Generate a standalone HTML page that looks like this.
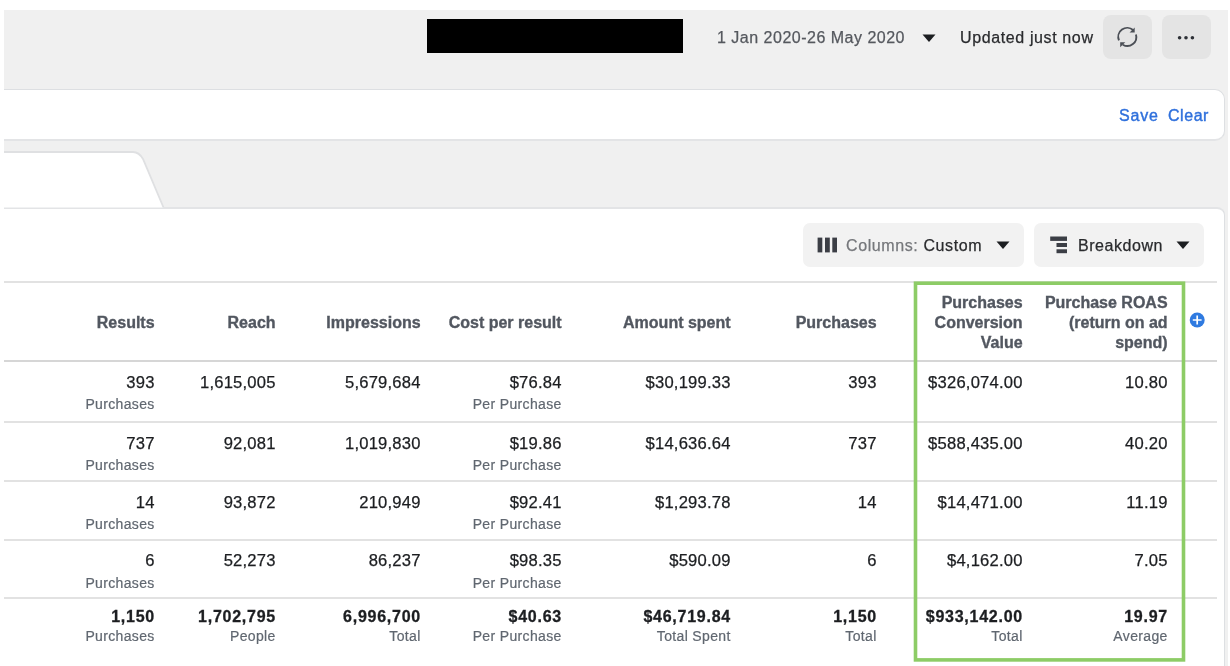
<!DOCTYPE html>
<html><head><meta charset="utf-8">
<style>
*{margin:0;padding:0;box-sizing:border-box}
html,body{width:1230px;height:666px;overflow:hidden;background:#fff;font-family:"Liberation Sans",sans-serif}
body{will-change:transform}
.a{position:absolute}
#bg{left:4px;top:10px;width:1224px;height:656px;background:#f0f0f0}
#redact{left:427px;top:19px;width:256px;height:34px;background:#000}
.t{position:absolute;white-space:nowrap;line-height:20px;-webkit-text-stroke:0.25px currentColor}
.btn{position:absolute;background:#e4e4e4;border-radius:8px}
#filter{left:4px;top:89px;width:1221px;height:52px;background:#fff;border:1px solid #dddfe2;border-bottom:2px solid #e3e4e6;border-left:none;border-radius:0 10px 10px 0}
#panel{left:4px;top:207px;width:1221px;height:470px;background:#fff;border:1px solid #dddfe2;border-top:2px solid #e3e4e6;border-left:none;border-radius:0 8px 0 0}
.tb{position:absolute;background:#f2f2f2;border-radius:7px}
.hl{position:absolute;left:4px;width:1213px;height:2px;background:#e2e2e2}
.h{position:absolute;white-space:nowrap;text-align:right;font-weight:bold;font-size:16px;line-height:20px;color:#525760;-webkit-text-stroke:0.35px #525760;margin-right:-0.6px}
.d{position:absolute;white-space:nowrap;text-align:right;font-size:16.6px;line-height:20px;color:#1c1e21;letter-spacing:0.2px;margin-right:-0.6px;-webkit-text-stroke:0.25px #1c1e21}
.s{position:absolute;white-space:nowrap;text-align:right;font-size:14px;line-height:18px;color:#606770;letter-spacing:0.35px;margin-right:-0.7px;-webkit-text-stroke:0.2px #606770}
.b{font-weight:bold;font-size:16px;letter-spacing:0.75px;margin-right:-1px;-webkit-text-stroke:0.3px #1c1e21}
</style></head><body>
<div class="a" id="bg"></div>
<div class="a" id="redact"></div>
<div class="t" style="left:717px;top:28px;font-size:16px;color:#55585e;letter-spacing:0.5px">1 Jan 2020-26 May 2020</div>
<svg class="a" style="left:922px;top:34px" width="14" height="9" viewBox="0 0 14 9"><path d="M0.5 0.5H13.5L7 8z" fill="#1c1e21"/></svg>
<div class="t" style="left:960px;top:28px;font-size:16px;color:#2a2b2e;letter-spacing:0.62px">Updated just now</div>
<div class="btn" style="left:1103px;top:15px;width:49px;height:44px"></div>
<div class="btn" style="left:1162px;top:15px;width:49px;height:44px"></div>
<svg class="a" style="left:1110px;top:20px" width="35" height="35" viewBox="0 0 35 35"><g fill="none" stroke="#4b4f56" stroke-width="1.9"><path d="M23.1 10A9 9 0 0 0 8.96 20.3"/><path d="M25.95 14.4A9 9 0 0 1 12.8 24.7"/></g><path d="M24.7 7.4V12.5H19.6z" fill="#4b4f56"/><path d="M10.2 22.3H15.3L10.2 27.2z" fill="#4b4f56"/></svg>
<svg class="a" style="left:1176px;top:34px" width="20" height="8" viewBox="0 0 20 8"><circle cx="3.6" cy="3.7" r="1.8" fill="#2d3036"/><circle cx="10" cy="3.7" r="1.8" fill="#2d3036"/><circle cx="16.4" cy="3.7" r="1.8" fill="#2d3036"/></svg>

<div class="a" id="filter"></div>
<div class="t" style="left:1119px;top:106px;font-size:16px;color:#2f70dc;letter-spacing:0.85px;-webkit-text-stroke:0.4px #2f70dc">Save</div>
<div class="t" style="left:1168px;top:106px;font-size:16px;color:#2f70dc;letter-spacing:0.55px;-webkit-text-stroke:0.4px #2f70dc">Clear</div>

<div class="a" id="panel"></div>
<svg class="a" style="left:4px;top:140px" width="170" height="70" viewBox="0 0 170 70"><path d="M0 12H129Q135 12 139 19L159.5 67.5H0z" fill="#fff"/><path d="M0 12H129Q135 12 139 19L159.5 67.5" fill="none" stroke="#dfe0e2" stroke-width="1.8"/></svg>

<div class="tb" style="left:803px;top:223px;width:221px;height:44px"></div>
<svg class="a" style="left:817px;top:237px" width="20" height="16" viewBox="0 0 20 16"><rect x="0.6" y="0.6" width="4.7" height="14.8" fill="#3b3e45"/><rect x="8" y="0.6" width="4.8" height="14.8" fill="#3b3e45"/><rect x="15.3" y="0.6" width="4.7" height="14.8" fill="#3b3e45"/></svg>
<div class="t" style="left:846px;top:236px;font-size:16px;color:#75777b;letter-spacing:0.6px">Columns: <span style="color:#2a2b2e">Custom</span></div>
<svg class="a" style="left:996px;top:241px" width="14" height="9" viewBox="0 0 14 9"><path d="M0.5 0.5H13.5L7 8z" fill="#1c1e21"/></svg>

<div class="tb" style="left:1034px;top:223px;width:170px;height:44px"></div>
<svg class="a" style="left:1050px;top:236px" width="18" height="18" viewBox="0 0 18 18"><rect x="0.2" y="0.5" width="16.8" height="4.4" fill="#3b3e45"/><rect x="6.5" y="7" width="10.5" height="4" fill="#3b3e45"/><rect x="6.5" y="13.3" width="10.5" height="3.9" fill="#3b3e45"/></svg>
<div class="t" style="left:1078px;top:236px;font-size:16px;color:#2a2b2e;letter-spacing:0.55px">Breakdown</div>
<svg class="a" style="left:1176px;top:241px" width="14" height="9" viewBox="0 0 14 9"><path d="M0.5 0.5H13.5L7 8z" fill="#1c1e21"/></svg>

<div class="hl" style="top:281px"></div>
<div class="hl" style="top:360px;background:#d6d6d6"></div>
<div class="hl" style="top:421px"></div>
<div class="hl" style="top:480px"></div>
<div class="hl" style="top:539px"></div>
<div class="hl" style="top:597px"></div>

<!-- header -->
<div class="h" style="right:1076px;top:313px">Results</div>
<div class="h" style="right:955px;top:313px">Reach</div>
<div class="h" style="right:810px;top:313px">Impressions</div>
<div class="h" style="right:669px;top:313px">Cost per result</div>
<div class="h" style="right:500px;top:313px">Amount spent</div>
<div class="h" style="right:354px;top:313px">Purchases</div>
<div class="h" style="right:208px;top:293px">Purchases<br>Conversion<br>Value</div>
<div class="h" style="right:63px;top:293px">Purchase ROAS<br>(return on ad<br>spend)</div>
<svg class="a" style="left:1188px;top:311px" width="19" height="19" viewBox="0 0 19 19"><circle cx="9.2" cy="9" r="7.5" fill="#2f7ae0"/><path d="M9.2 4.6V13.4M4.8 9H13.6" stroke="#fff" stroke-width="1.7"/></svg>

<!-- rows -->
<div class="d" style="right:1076px;top:373px">393</div>
<div class="s" style="right:1076px;top:395px">Purchases</div>
<div class="d" style="right:955px;top:373px">1,615,005</div>
<div class="d" style="right:810px;top:373px">5,679,684</div>
<div class="d" style="right:669px;top:373px">$76.84</div>
<div class="s" style="right:669px;top:395px">Per Purchase</div>
<div class="d" style="right:500px;top:373px">$30,199.33</div>
<div class="d" style="right:354px;top:373px">393</div>
<div class="d" style="right:208px;top:373px">$326,074.00</div>
<div class="d" style="right:63px;top:373px">10.80</div>
<div class="d" style="right:1076px;top:434px">737</div>
<div class="s" style="right:1076px;top:456px">Purchases</div>
<div class="d" style="right:955px;top:434px">92,081</div>
<div class="d" style="right:810px;top:434px">1,019,830</div>
<div class="d" style="right:669px;top:434px">$19.86</div>
<div class="s" style="right:669px;top:456px">Per Purchase</div>
<div class="d" style="right:500px;top:434px">$14,636.64</div>
<div class="d" style="right:354px;top:434px">737</div>
<div class="d" style="right:208px;top:434px">$588,435.00</div>
<div class="d" style="right:63px;top:434px">40.20</div>
<div class="d" style="right:1076px;top:493px">14</div>
<div class="s" style="right:1076px;top:515px">Purchases</div>
<div class="d" style="right:955px;top:493px">93,872</div>
<div class="d" style="right:810px;top:493px">210,949</div>
<div class="d" style="right:669px;top:493px">$92.41</div>
<div class="s" style="right:669px;top:515px">Per Purchase</div>
<div class="d" style="right:500px;top:493px">$1,293.78</div>
<div class="d" style="right:354px;top:493px">14</div>
<div class="d" style="right:208px;top:493px">$14,471.00</div>
<div class="d" style="right:63px;top:493px">11.19</div>
<div class="d" style="right:1076px;top:551px">6</div>
<div class="s" style="right:1076px;top:574px">Purchases</div>
<div class="d" style="right:955px;top:551px">52,273</div>
<div class="d" style="right:810px;top:551px">86,237</div>
<div class="d" style="right:669px;top:551px">$98.35</div>
<div class="s" style="right:669px;top:574px">Per Purchase</div>
<div class="d" style="right:500px;top:551px">$590.09</div>
<div class="d" style="right:354px;top:551px">6</div>
<div class="d" style="right:208px;top:551px">$4,162.00</div>
<div class="d" style="right:63px;top:551px">7.05</div>
<div class="d b" style="right:1076px;top:607px">1,150</div>
<div class="s" style="right:1076px;top:627px">Purchases</div>
<div class="d b" style="right:955px;top:607px">1,702,795</div>
<div class="s" style="right:955px;top:627px">People</div>
<div class="d b" style="right:810px;top:607px">6,996,700</div>
<div class="s" style="right:810px;top:627px">Total</div>
<div class="d b" style="right:669px;top:607px">$40.63</div>
<div class="s" style="right:669px;top:627px">Per Purchase</div>
<div class="d b" style="right:500px;top:607px">$46,719.84</div>
<div class="s" style="right:500px;top:627px">Total Spent</div>
<div class="d b" style="right:354px;top:607px">1,150</div>
<div class="s" style="right:354px;top:627px">Total</div>
<div class="d b" style="right:208px;top:607px">$933,142.00</div>
<div class="s" style="right:208px;top:627px">Total</div>
<div class="d b" style="right:63px;top:607px">19.97</div>
<div class="s" style="right:63px;top:627px">Average</div>
<!-- /rows -->
<svg class="a" style="left:910px;top:278px" width="280" height="388" viewBox="0 0 280 388"><rect x="5.5" y="5.2" width="268" height="376.7" fill="none" stroke="#8dcc66" stroke-width="3.6"/></svg>
</body></html>
